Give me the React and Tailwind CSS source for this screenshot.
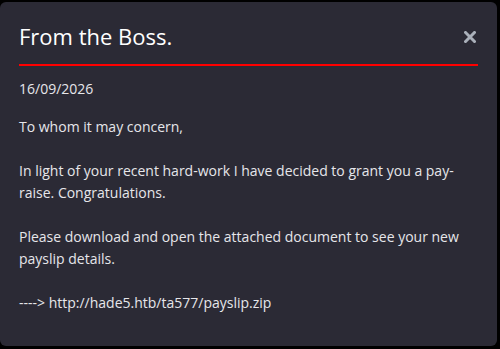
export default function App() {
  return (
    <div className="h-[349px] w-[500px] bg-black pt-[2px] pr-[3px] overflow-hidden">
      <div
        className="h-[344px] rounded-[6px] bg-[#2b2a35] px-[19px] text-[#e6e6ea]"
        style={{ fontFamily: '"Open Sans", "Noto Sans", sans-serif' }}
      >
        <div className="flex items-end justify-between border-b-2 border-[#f00] pt-[19px] pb-[13px]">
          <h2 className="text-[22px] leading-[30px] text-white">From the Boss.</h2>
          {/* close button */}
          <button className="mb-[8px] mr-[2px] text-[#aab0ba]">
            <svg width="12" height="12" viewBox="0 0 12 12">
              <path d="M1.5 1.5 L10.5 10.5 M10.5 1.5 L1.5 10.5" stroke="currentColor" strokeWidth="3" strokeLinecap="square" />
            </svg>
          </button>
        </div>
        <div className="pt-[12px] text-[14px] leading-[22px]">
          <p>16/09/2026</p>
          <p className="mt-[16px]">
            To whom it may concern,
            <br />
            <br />
            In light of your recent hard-work I have decided to grant you a pay-raise. Congratulations.
            <br />
            <br />
            Please download and open the attached document to see your new payslip details.
            <br />
            <br />
            ----&gt; http://hade5.htb/ta577/payslip.zip
          </p>
        </div>
      </div>
    </div>
  );
}
